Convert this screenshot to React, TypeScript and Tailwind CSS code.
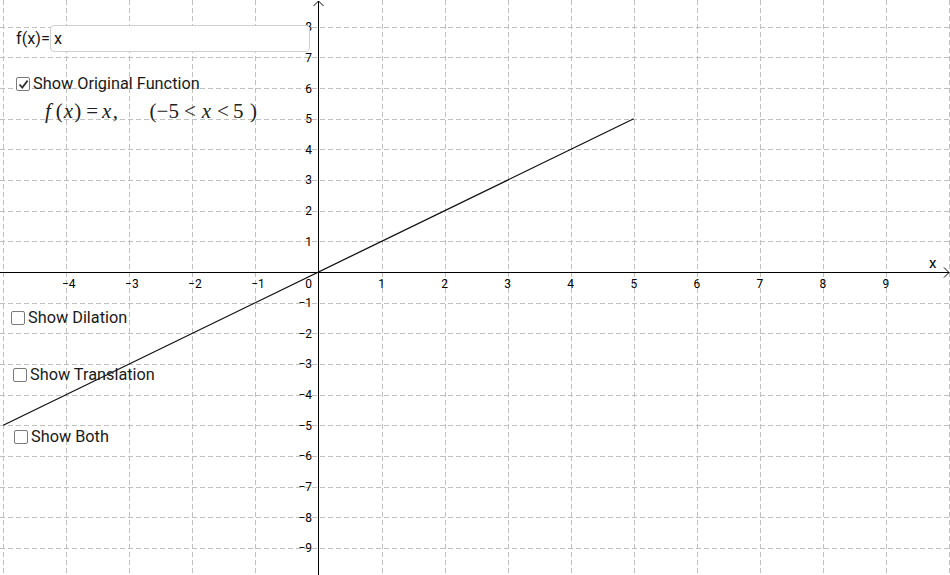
import React from 'react';

const W = 950;
const H = 575;
const OX = 318.5;
const OY = 272;
const UX = 63.05;
const UY = 30.65;

const px = (x: number) => OX + x * UX;
const py = (y: number) => OY - y * UY;
const crisp = (v: number) => Math.round(v) + 0.5;

const xTicks = [-4, -3, -2, -1, 1, 2, 3, 4, 5, 6, 7, 8, 9];
const yTicks = [8, 7, 6, 5, 4, 3, 2, 1, -1, -2, -3, -4, -5, -6, -7, -8, -9];

const fmt = (n: number) => (n < 0 ? '\u2212' + Math.abs(n) : String(n));

const Graph: React.FC = () => {
  const vLines: number[] = [];
  for (let k = -5; k <= 10; k++) if (k !== 0) vLines.push(crisp(px(k)));
  const hLines: number[] = [];
  for (let k = -9; k <= 8; k++) if (k !== 0) hLines.push(crisp(py(k)));

  return (
    <svg width={W} height={H} className="absolute inset-0" style={{ fontFamily: 'Roboto, "Liberation Sans", sans-serif' }}>
      <g stroke="#c0c0c0" strokeWidth={1} strokeDasharray="5 3">
        {vLines.map((x) => (
          <line key={'v' + x} x1={x} y1={0} x2={x} y2={H} />
        ))}
        {hLines.map((y) => (
          <line key={'h' + y} x1={0} y1={y} x2={W} y2={y} />
        ))}
      </g>

      {/* axes */}
      <g stroke="#000" strokeWidth={1} fill="none">
        <line x1={0} y1={OY + 0.5} x2={949} y2={OY + 0.5} />
        <line x1={OX} y1={1} x2={OX} y2={H} />
        <polyline points="944,267.5 949,272.5 944,277.5" />
        <polyline points="313.5,6 318.5,1 323.5,6" />
      </g>

      {/* x labels */}
      <g fontSize={12} fill="#000" textAnchor="middle">
        {xTicks.map((n) => (
          <text key={n} x={px(n) + (n < 0 ? 2.5 : 0)} y={288}>
            {fmt(n)}
          </text>
        ))}
        <text x={308.5} y={288}>0</text>
      </g>

      {/* y labels */}
      <g fontSize={12} fill="#000" textAnchor="end">
        {yTicks.map((n) => (
          <text key={n} x={312} y={py(n) + 4.4}>
            {fmt(n)}
          </text>
        ))}
      </g>

      <text x={929} y={268} fontSize={15} fill="#000">x</text>

      {/* f(x) = x on (-5, 5) */}
      <line x1={px(-5)} y1={py(-5)} x2={px(5)} y2={py(5)} stroke="#111" strokeWidth={1.3} />
    </svg>
  );
};

const Box: React.FC<{ checked?: boolean }> = ({ checked }) => (
  <span className="inline-flex w-[14px] h-[14px] shrink-0 items-center justify-center rounded-[2px] border-[1.5px] border-[#7a7a7a] bg-white">
    {checked && (
      <svg width="11" height="11" viewBox="0 0 11 11">
        <polyline points="1.5,5.5 4.3,8.6 9.6,1.6" fill="none" stroke="#333" strokeWidth="1.8" />
      </svg>
    )}
  </span>
);

const Check: React.FC<{ label: string; checked?: boolean; className: string }> = ({ label, checked, className }) => (
  <label className={'absolute flex items-center gap-[3px] text-[16.3px] text-[#1a1a1a] leading-none ' + className}>
    <Box checked={checked} />
    <span>{label}</span>
  </label>
);

const App: React.FC = () => {
  return (
    <div className="relative w-[950px] h-[575px] overflow-hidden bg-white font-['Roboto','Liberation_Sans',sans-serif]">
      <Graph />

      <div className="absolute left-[16px] top-[26px] flex items-center h-[27px]">
        <span className="text-[16.3px] text-[#1a1a1a]">f(x)=</span>
      </div>
      <div className="absolute left-[50px] top-[25px] w-[260px] h-[27px] rounded-[4px] border-[1.5px] border-[#d0d0d0] bg-white flex items-center pl-[3px] pt-[2px] text-[16.3px] text-[#1a1a1a]">
        x
      </div>

      <Check label="Show Original Function" checked className="left-[16px] top-[76px]" />

      {/* typeset formula: f(x) = x,  (−5 < x < 5) */}
      <div className="absolute left-[45px] top-[101px] flex items-baseline whitespace-pre text-[21px] text-[#222] font-['Liberation_Serif',serif] leading-none">
        <span className="italic">f</span>
        <span className="ml-[5px]">(</span>
        <span className="ml-[1px] italic">x</span>
        <span className="ml-[1px]">)</span>
        <span className="ml-[5px]">=</span>
        <span className="ml-[4px] italic">x</span>
        <span className="ml-[1.5px]">,</span>
        <span className="ml-[31.5px]">(</span>
        <span>&minus;5</span>
        <span className="ml-[5px]">&lt;</span>
        <span className="ml-[6px] italic">x</span>
        <span className="ml-[6px]">&lt;</span>
        <span className="ml-[4px]">5</span>
        <span className="ml-[6.5px]">)</span>
      </div>

      <Check label="Show Dilation" className="left-[11px] top-[310px]" />
      <Check label="Show Translation" className="left-[13px] top-[367px]" />
      <Check label="Show Both" className="left-[14px] top-[429px]" />
    </div>
  );
};

export default App;
